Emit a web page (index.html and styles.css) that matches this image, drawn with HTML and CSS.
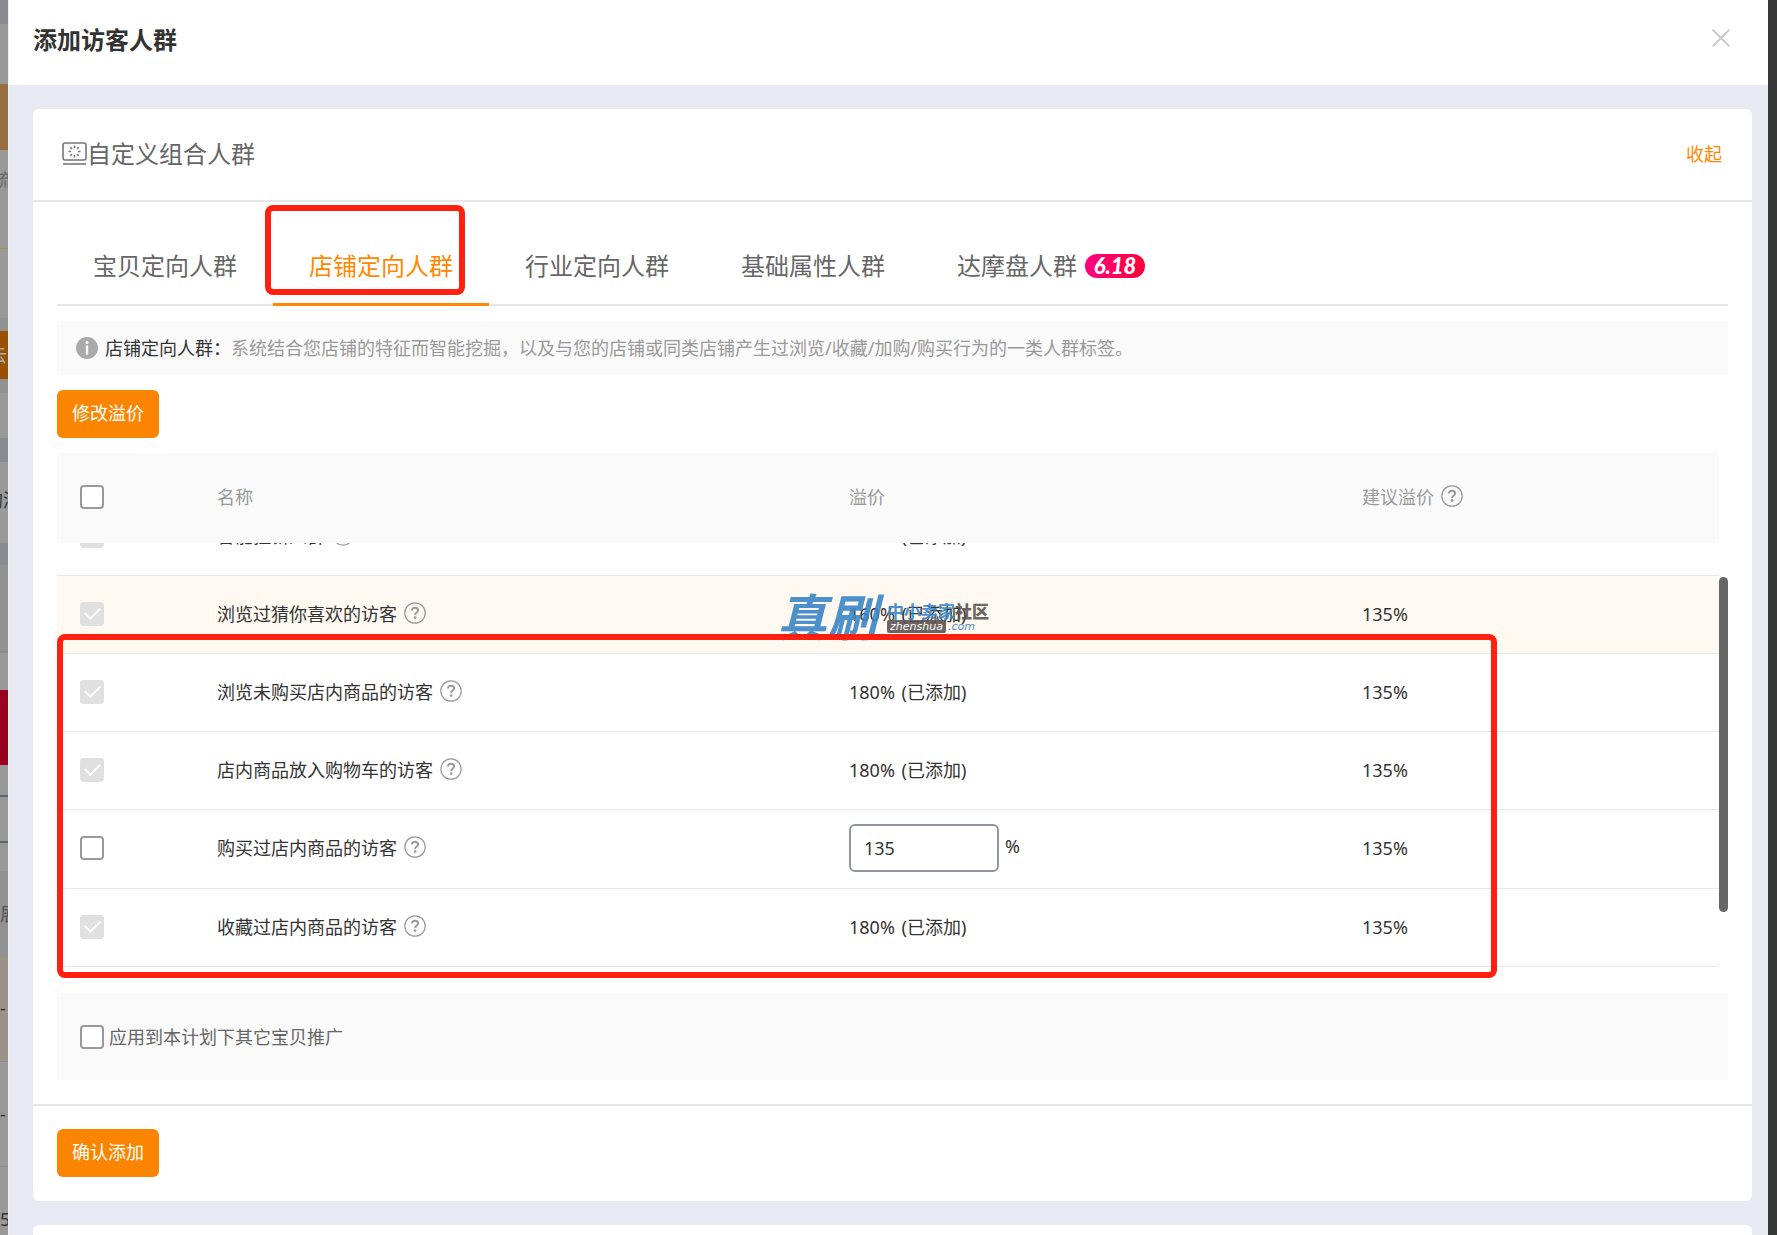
FILE: index.html
```
<!DOCTYPE html>
<html lang="zh-CN">
<head>
    <meta charset="UTF-8">
    <meta name="viewport" content="width=device-width, initial-scale=1.0">
    <title>添加访客人群</title>
    <link rel="stylesheet" href="styles.css">
</head>
<body>
    <svg width="0" height="0" class="sprite">
        <symbol id="help" viewBox="0 0 22 22">
            <circle cx="11" cy="11" r="10.2" fill="none" stroke="#999" stroke-width="1.2"/>
            <path d="M7.9 8.6C7.9 6.9 9.2 5.7 11 5.7s3.1 1.1 3.1 2.7c0 2.1-3 2.3-3 4.6" fill="none" stroke="#999" stroke-width="1.9"/>
            <circle cx="11.1" cy="15.6" r="1.3" fill="#999"/>
        </symbol>
    </svg>

    <!-- dimmed page behind the drawer -->
    <div class="behind">
        <div class="band band-blue h24"></div>
        <div class="band h60"></div>
        <div class="band band-tan h66"></div>
        <div class="band band-source">流</div>
        <div class="band band-rule"></div>
        <div class="band band-low"></div>
        <div class="band band-orange">云</div>
        <div class="band band-grey h14"></div>
        <div class="band h45"></div>
        <div class="band band-blue h24"></div>
        <div class="band band-add">的添</div>
        <div class="band band-blue h22"></div>
        <div class="band band-grey h86"></div>
        <div class="band h39"></div>
        <div class="band band-red"></div>
        <div class="band h30"></div>
        <div class="band band-line h46"></div>
        <div class="band band-line h30"></div>
        <div class="band band-grey band-show">展</div>
        <div class="band band-warm">-</div>
        <div class="band band-cell">-</div>
        <div class="band band-cell">5</div>
    </div>

    <div class="drawer">
        <header class="drawer-header">
            <h1>添加访客人群</h1>
            <button class="close" aria-label="关闭">
                <svg width="18" height="18" viewBox="0 0 18 18"><path d="M0.7 0.7L17.3 17.3M17.3 0.7L0.7 17.3" stroke="#ccc" stroke-width="2"/></svg>
            </button>
        </header>

        <main class="drawer-body">
            <section class="card">
                <div class="card-header">
                    <svg width="25" height="24" viewBox="0 0 25 24" fill="none" stroke="#777" stroke-width="1.6">
                        <rect x="1" y="1" width="23" height="17" rx="2"/>
                        <path d="M1 22h23"/>
                        <path d="M12.5 3.500v2.500M12.5 13v2.500M6.500 9.500h2.500M16 9.500h2.500M8.300 5.300l1.600 1.600M15.100 12.100l1.600 1.600M16.700 5.300l-1.600 1.600M9.900 12.100l-1.600 1.600"/>
                    </svg>
                    <h2>自定义组合人群</h2>
                    <a href="#" class="toggle">收起</a>
                </div>

                <div class="card-body">
                    <nav class="tabs">
                        <a href="#" class="tab">宝贝定向人群</a>
                        <a href="#" class="tab active">店铺定向人群<span class="mark mark-tab"></span></a>
                        <a href="#" class="tab">行业定向人群</a>
                        <a href="#" class="tab">基础属性人群</a>
                        <a href="#" class="tab">达摩盘人群<span class="badge">6.18</span></a>
                    </nav>

                    <p class="notice">
                        <svg width="22" height="22" viewBox="0 0 22 22"><circle cx="11" cy="11" r="11" fill="#aaa"/><circle cx="11" cy="5.500" r="1.500" fill="#fff"/><path d="M11 8.500v9" stroke="#fff" stroke-width="2.400"/></svg>
                        <span class="notice-label">店铺定向人群：</span>
                        <span>系统结合您店铺的特征而智能挖掘，以及与您的店铺或同类店铺产生过浏览/收藏/加购/购买行为的一类人群标签。</span>
                    </p>

                    <button class="btn">修改溢价</button>

                    <div class="list">
                        <table class="grid grid-head">
                            <colgroup><col class="c-check"><col class="c-name"><col class="c-price"><col></colgroup>
                            <thead>
                                <tr>
                                    <th><input type="checkbox" aria-label="全选"></th>
                                    <th>名称</th>
                                    <th>溢价</th>
                                    <th>建议溢价<svg class="help"><use href="#help"/></svg></th>
                                </tr>
                            </thead>
                        </table>
                        <div class="list-body">
                            <table class="grid">
                                <colgroup><col class="c-check"><col class="c-name"><col class="c-price"><col></colgroup>
                                <tbody>
                                    <tr>
                                        <td><input type="checkbox" id="v1" checked disabled></td>
                                        <td><label for="v1">智能拉新人群</label><svg class="help"><use href="#help"/></svg></td>
                                        <td>160% <span class="added">(已添加)</span></td>
                                        <td>135%</td>
                                    </tr>
                                    <tr class="hover">
                                        <td><input type="checkbox" id="v2" checked disabled></td>
                                        <td><label for="v2">浏览过猜你喜欢的访客</label><svg class="help"><use href="#help"/></svg></td>
                                        <td>160% <span class="added">(已添加)</span></td>
                                        <td>135%</td>
                                    </tr>
                                    <tr>
                                        <td><input type="checkbox" id="v3" checked disabled></td>
                                        <td><label for="v3">浏览未购买店内商品的访客</label><svg class="help"><use href="#help"/></svg></td>
                                        <td>180% <span class="added">(已添加)</span></td>
                                        <td>135%</td>
                                    </tr>
                                    <tr>
                                        <td><input type="checkbox" id="v4" checked disabled></td>
                                        <td><label for="v4">店内商品放入购物车的访客</label><svg class="help"><use href="#help"/></svg></td>
                                        <td>180% <span class="added">(已添加)</span></td>
                                        <td>135%</td>
                                    </tr>
                                    <tr class="editable">
                                        <td><input type="checkbox" id="v5"></td>
                                        <td><label for="v5">购买过店内商品的访客</label><svg class="help"><use href="#help"/></svg></td>
                                        <td><input type="text" class="price" value="135" aria-label="溢价">%</td>
                                        <td>135%</td>
                                    </tr>
                                    <tr>
                                        <td><input type="checkbox" id="v6" checked disabled></td>
                                        <td><label for="v6">收藏过店内商品的访客</label><svg class="help"><use href="#help"/></svg></td>
                                        <td>180% <span class="added">(已添加)</span></td>
                                        <td>135%</td>
                                    </tr>
                                </tbody>
                            </table>
                        </div>
                        <div class="thumb"></div>
                        <div class="watermark">
                            <span class="wm-name">真刷</span>
                            <span class="wm-side">
                                <span class="wm-top">中小卖家<b>社区</b></span>
                                <span class="wm-url"><b>zhenshua</b>.com</span>
                            </span>
                        </div>
                        <div class="mark mark-rows"></div>
                    </div>

                    <div class="apply">
                        <input type="checkbox" id="apply">
                        <label for="apply">应用到本计划下其它宝贝推广</label>
                    </div>
                </div>

                <div class="card-footer">
                    <button class="btn">确认添加</button>
                </div>
            </section>

            <section class="card card-next"></section>
        </main>
    </div>

    <div class="page-edge"></div>
</body>
</html>
```

FILE: styles.css
```
* {
    box-sizing: border-box;
}

body {
    display: flex;
    height: 100vh;
    margin: 0;
    overflow: hidden;
    font-family: "Noto Sans", "Noto Sans CJK SC", sans-serif;
    font-size: 18px;
    line-height: 26px;
    color: #333;
    background: #fff;
}

h1, h2, p {
    margin: 0;
}

a {
    text-decoration: none;
}

.sprite {
    position: absolute;
}

/* page behind */
.behind {
    flex: none;
    width: 8px;
    overflow: hidden;
    background: #999;
}

.band {
    overflow: hidden;
    white-space: nowrap;
    background: #999;
}

.band-blue { background: #8a8b91; }
.band-tan { background: #976e3f; }
.band-grey { background: #929292; }
.h14 { height: 14px; }
.h22 { height: 22px; }
.h24 { height: 24px; }
.h30 { height: 30px; }
.h39 { height: 39px; border-top: 2px solid #8b8b8b; }
.h45 { height: 45px; }
.h46 { height: 46px; }
.h60 { height: 60px; }
.h66 { height: 66px; }
.h86 { height: 86px; }
.band-source { height: 98px; line-height: 60px; text-indent: -6px; color: #666; }
.band-rule { height: 70px; border-top: 1px solid #bb8440; }
.band-low { height: 13px; background: #929292; }
.band-orange { height: 48px; line-height: 48px; text-indent: -11px; color: #aaa; background: #995000; }
.band-add { height: 81px; line-height: 76px; text-indent: -15px; color: #333; }
.band-red { height: 75px; background: #990020; }
.band-line { border-top: 2px solid #606270; }
.band-show { height: 86px; line-height: 86px; color: #555; }
.band-warm { height: 104px; line-height: 102px; background: #99938a; }
.band-cell { height: 105px; line-height: 105px; border-top: 1px solid #8b8b8b; }

.page-edge {
    flex: none;
    width: 9px;
    background: #383839;
}

/* drawer */
.drawer {
    display: flex;
    flex: 1;
    flex-direction: column;
    min-width: 0;
    border-left: 1px solid #f2f2f2;
}

.drawer-header {
    display: flex;
    flex: none;
    align-items: flex-start;
    justify-content: space-between;
    height: 85px;
    padding: 22px 38px 0 24px;
    background: #fff;
}

.drawer-header h1 {
    font-size: 24px;
    line-height: 36px;
}

.close {
    display: flex;
    padding: 7px 0;
    border: none;
    background: none;
    cursor: pointer;
}

.drawer-body {
    flex: 1;
    min-height: 0;
    padding: 24px 16px 0 24px;
    overflow: hidden;
    background: #e7eaf3;
}

.card {
    margin-bottom: 24px;
    border-radius: 6px;
    background: #fff;
}

.card-next {
    height: 90px;
}

.card-header {
    display: flex;
    align-items: center;
    height: 93px;
    padding: 0 30px 2px 29px;
    border-bottom: 2px solid #e6e6e6;
}

.card-header h2 {
    font-size: 24px;
    font-weight: normal;
    line-height: 36px;
    color: #666;
}

.toggle {
    margin-left: auto;
    color: #ff8800;
}

.card-body {
    padding: 0 24px 24px;
}

/* tabs */
.tabs {
    display: flex;
    height: 104px;
    border-bottom: 2px solid #e6e6e6;
}

.tab {
    position: relative;
    display: flex;
    align-items: center;
    height: 104px;
    padding: 24px 36px 0;
    font-size: 24px;
    line-height: 36px;
    white-space: nowrap;
    color: #666;
}

.tab.active {
    color: #ff8800;
    box-shadow: inset 0 -3px #ff8800;
}

.badge {
    width: 60px;
    height: 24px;
    margin-left: 8px;
    border-radius: 12px;
    font-family: Lato, "Noto Sans", sans-serif;
    font-size: 22px;
    font-style: italic;
    font-weight: 900;
    line-height: 24px;
    text-align: center;
    color: #fff;
    background: linear-gradient(90deg, #ff0080, #ff0036);
}

/* red highlight boxes */
.mark {
    position: absolute;
    border: 6px solid #ff2010;
    border-radius: 8px;
    pointer-events: none;
}

.mark-tab {
    top: 3px;
    left: -8px;
    width: 200px;
    height: 90px;
}

.mark-rows {
    top: 181px;
    left: 0;
    width: 1440px;
    height: 344px;
}

.notice {
    display: flex;
    align-items: center;
    height: 54px;
    margin: 15px 0;
    padding: 0 19px;
    white-space: nowrap;
    color: #999;
    background: #fafafa;
}

.notice-label {
    margin-left: 7px;
    color: #333;
}

.btn {
    height: 48px;
    padding: 0 15px 5px;
    border: none;
    border-radius: 6px;
    font-family: inherit;
    font-size: 18px;
    color: #fff;
    background: #fb8500;
    cursor: pointer;
}

.card-body .btn {
    display: block;
}

/* table */
.list {
    position: relative;
    margin: 15px 0 24px;
    padding-right: 9px;
}

.list-body {
    display: flex;
    flex-direction: column;
    justify-content: flex-end;
    height: 426px;
    padding-bottom: 2px;
    overflow: hidden;
}

.grid {
    flex: none;
    width: 100%;
    table-layout: fixed;
    border-collapse: separate;
    border-spacing: 0;
}

.c-check { width: 145px; }
.c-name { width: 632px; }
.c-price { width: 513px; }

.grid th,
.grid td {
    padding: 0 0 2px 15px;
    text-align: left;
    vertical-align: middle;
}

.grid th {
    height: 90px;
    font-weight: normal;
    color: #999;
    background: #fafafa;
}

.grid td {
    height: 78px;
    border-bottom: 1px solid #e8e8e8;
}

.grid .editable td {
    height: 79px;
}

.grid th:first-child,
.grid td:first-child {
    padding-left: 23px;
}

.grid .hover td {
    background: #fff9f2;
}

.added {
    margin-left: 2px;
}

.help {
    width: 22px;
    height: 22px;
    margin-left: 7px;
    vertical-align: -3px;
}

input[type="checkbox"] {
    display: block;
    flex: none;
    width: 24px;
    height: 24px;
    margin: 0;
    appearance: none;
    border: 2px solid #999;
    border-radius: 4px;
    background: #fff;
}

input[type="checkbox"]:disabled {
    border-color: #e0e0e0;
    background: #e0e0e0;
}

input[type="checkbox"]:checked::before {
    content: "";
    display: block;
    width: 7px;
    height: 13px;
    margin: 0 0 0 6px;
    border: solid #fff;
    border-width: 0 2px 2px 0;
    transform: rotate(45deg);
}

.price {
    width: 150px;
    height: 48px;
    margin-right: 6px;
    padding: 0 13px;
    border: 2px solid #9094a6;
    border-radius: 6px;
    font-family: inherit;
    font-size: 18px;
    color: #333;
    vertical-align: middle;
}

.thumb {
    position: absolute;
    top: 124px;
    right: 0;
    width: 9px;
    height: 335px;
    border-radius: 5px;
    background: #666;
}

/* watermark over the rows */
.watermark {
    position: absolute;
    top: 136px;
    left: 720px;
    display: flex;
    align-items: center;
    gap: 10px;
    white-space: nowrap;
    color: #3a86c8;
    opacity: 0.9;
    pointer-events: none;
}

.wm-name {
    font-size: 50px;
    font-style: italic;
    font-weight: bold;
    line-height: 56px;
}

.wm-side {
    display: flex;
    flex-direction: column;
    padding-top: 2px;
}

.wm-top {
    font-size: 17px;
    font-weight: bold;
    line-height: 18px;
}

.wm-top b {
    color: #5c5452;
}

.wm-url {
    font-family: "DejaVu Sans", sans-serif;
    font-size: 11px;
    font-style: italic;
    line-height: 12px;
}

.wm-url b {
    margin-right: 2px;
    padding: 0 3px;
    border-radius: 2px;
    font-weight: normal;
    color: #fff;
    background: #5c5452;
}

.apply {
    display: flex;
    align-items: center;
    gap: 5px;
    height: 87px;
    padding: 0 23px;
    color: #666;
    background: #fafafa;
}

.card-footer {
    padding: 23px 24px 24px;
    border-top: 2px solid #e6e6e6;
}

.card-footer .btn {
    display: block;
}
```
